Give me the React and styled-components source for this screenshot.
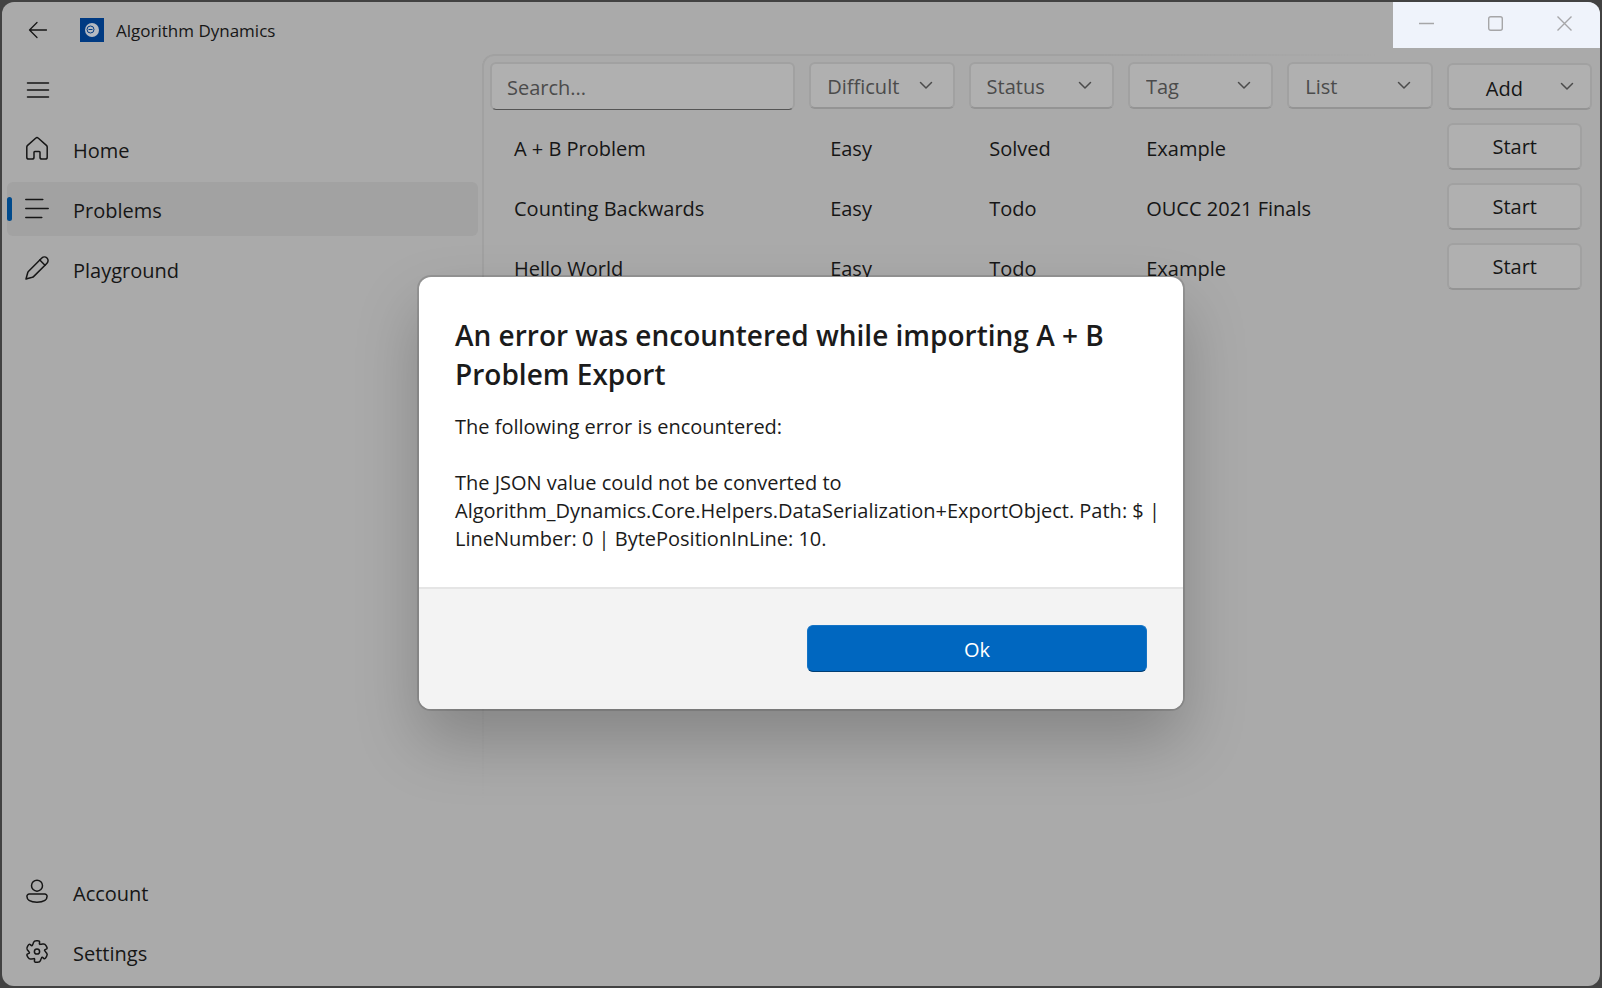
import React from "react";
import styled, { createGlobalStyle } from "styled-components";

const Global = createGlobalStyle`
  *, *::before, *::after { box-sizing: border-box; }
  html, body, #root { height: 100%; }
  body {
    margin: 0;
    background: #424242;
    color: #161616;
    font-family: "Open Sans", "Noto Sans", sans-serif;
    font-size: 20px;
    line-height: 28px;
  }
  button, input, select { font: inherit; color: inherit; margin: 0; }
  svg { display: block; flex: none; fill: none; stroke: currentColor; }
`;

const Desktop = styled.div`
  min-height: 100%;
  display: flex;
  padding: 2px;
`;

const Window = styled.div`
  position: relative;
  flex: 1;
  display: flex;
  flex-direction: column;
  overflow: hidden;
  border-radius: 12px;
  background: #aaaaaa;
`;

const TitleBar = styled.header`
  display: flex;
  align-items: flex-start;
  height: 52px;
`;

const BackButton = styled.button`
  display: grid;
  place-items: center;
  width: 60px;
  height: 56px;
  margin-left: 6px;
  padding: 0;
  border: 0;
  background: none;
`;

const AppTitle = styled.div`
  display: flex;
  flex: 1;
  align-items: center;
  gap: 12px;
  height: 56px;
  padding-left: 12px;
  font-size: 17px;

  span { padding-top: 2px; }
`;

const Caption = styled.div`
  display: flex;
  background: #eff3fb;
`;

const CaptionButton = styled.button`
  display: grid;
  place-items: center;
  width: 69px;
  height: 46px;
  padding: 0 2px 3px 0;
  border: 0;
  background: none;
  color: #a6a6a8;
`;

const Body = styled.div`
  display: flex;
  flex: 1;
`;

const Sidebar = styled.nav`
  display: flex;
  flex: none;
  flex-direction: column;
  gap: 6px;
  width: 480px;
  padding: 8px 4px 7px 5px;
`;

const MenuButton = styled.button`
  display: flex;
  align-items: center;
  width: 62px;
  height: 54px;
  padding: 2px 0 0 19px;
  border: 0;
  background: none;
`;

const Spacer = styled.div`
  flex: 1;
`;

const NavItem = styled.a`
  position: relative;
  display: flex;
  align-items: center;
  gap: 24px;
  height: 54px;
  padding-left: 18px;
  border-radius: 6px;
  background: ${(p) => (p.$active ? "#a2a2a2" : "transparent")};
  color: inherit;
  text-decoration: none;

  &::before {
    content: "";
    display: ${(p) => (p.$active ? "block" : "none")};
    position: absolute;
    left: 0;
    width: 5px;
    height: 24px;
    border-radius: 3px;
    background: #004a8c;
  }

  svg { margin-bottom: 2px; }
  span { padding-top: 4px; }
`;

const Panel = styled.main`
  position: relative;
  flex: 1;
  min-width: 0;
  padding: 8px 8px 0;

  &::before {
    content: "";
    position: absolute;
    inset: 0;
    border: 2px solid #a1a1a1;
    border-width: 2px 0 0 2px;
    border-top-left-radius: 12px;
    mask-image: linear-gradient(to bottom, #000 55%, transparent 80%),
      linear-gradient(to right, #000 55%, transparent 80%);
    mask-composite: intersect;
    pointer-events: none;
  }
`;

const Toolbar = styled.div`
  display: grid;
  grid-template-columns: 21fr repeat(5, 10fr);
  gap: 14px;
  height: 48px;
`;

const SearchBox = styled.input`
  min-width: 0;
  height: 48px;
  padding: 2px 15px 0;
  border: 2px solid #a1a1a1;
  border-bottom: 1px solid #555555;
  border-radius: 6px;
  background: #b0b0b0;
  outline: none;

  &::placeholder { color: #4b4b4b; opacity: 1; }
`;

const Combo = styled.div`
  display: grid;
  align-items: center;
  height: 47px;
  color: #4b4b4b;

  > * { grid-area: 1 / 1; }
  svg { justify-self: end; margin-right: 22px; pointer-events: none; }
`;

const ComboSelect = styled.select`
  appearance: none;
  width: 100%;
  min-width: 0;
  height: 47px;
  padding: 2px 40px 0 16px;
  border: 2px solid #a1a1a1;
  border-bottom-color: #949494;
  border-radius: 6px;
  background: #b0b0b0;
`;

const PushButton = styled.button`
  display: flex;
  align-items: center;
  justify-content: center;
  width: 100%;
  height: 47px;
  padding: 2px 0 0;
  border: 2px solid #a1a1a1;
  border-bottom-color: #949494;
  border-radius: 6px;
  background: #b0b0b0;
`;

const AddButton = styled(PushButton)`
  align-self: end;
  padding: 0 16px 0 0;

  span { flex: 1; padding-top: 4px; text-align: center; }
  svg { color: #4b4b4b; }
`;

const ProblemTable = styled.table`
  width: calc(100% - 34px);
  margin: 6px 10px 0 24px;
  table-layout: fixed;
  border-collapse: collapse;
`;

const Cell = styled.td`
  width: ${(p) => p.$width};
  height: 60px;
  padding: 6px 0 0;
  white-space: nowrap;
`;

const ActionCell = styled(Cell)`
  padding: 0;
`;

const Overlay = styled.div`
  position: absolute;
  inset: 0;
  display: grid;
  place-items: center;
  padding-bottom: 2px;
  pointer-events: none;
`;

const Dialog = styled.section`
  width: 764px;
  max-width: 90%;
  overflow: hidden;
  border-radius: 12px;
  background: #ffffff;
  color: #1b1b1b;
  box-shadow: 0 0 0 2px rgba(0, 0, 0, 0.12), 0 32px 64px rgba(0, 0, 0, 0.22);
  pointer-events: auto;
`;

const DialogBody = styled.div`
  padding: 39px 16px 34px 36px;
`;

const DialogTitle = styled.h1`
  margin: 0 0 19px;
  font-size: 28px;
  font-weight: 600;
  line-height: 39px;
`;

const Message = styled.p`
  margin: 0;

  & + & { margin-top: 28px; }
`;

const DialogFooter = styled.footer`
  display: grid;
  grid-template-columns: 1fr 1fr;
  gap: 12px;
  padding: 36px 36px 37px;
  border-top: 2px solid #e5e5e5;
  background: #f3f3f3;
`;

const PrimaryButton = styled.button`
  grid-column: 2;
  height: 47px;
  padding: 2px 0 0;
  border: 1px solid #1473c5;
  border-bottom-color: #003e73;
  border-radius: 6px;
  background: #0067c0;
  color: #ffffff;
`;

const Chevron = () => (
  <svg width="14" height="9" viewBox="0 0 14 9" strokeWidth="1.5" strokeLinecap="round" strokeLinejoin="round">
    <path d="M1.5 1.5 7 7l5.5-5.5" />
  </svg>
);

// Outline of a six-toothed gear, its corners rounded by curves between edge midpoints.
const gearPath = () => {
  const pts = [];
  for (let tooth = 0; tooth < 6; tooth += 1) {
    [[11.1, -15], [11.1, 15], [7.4, 17], [8.3, 30]].forEach(([r, offset]) => {
      const a = ((tooth * 60 + offset - 90) * Math.PI) / 180;
      pts.push([12 + r * Math.cos(a), 12.5 + r * Math.sin(a)]);
    });
  }
  const toward = (p, q, t) => [p[0] + (q[0] - p[0]) * t, p[1] + (q[1] - p[1]) * t];
  return (
    pts
      .map((p, i) => {
        const before = toward(p, pts[(i + pts.length - 1) % pts.length], 0.4);
        const after = toward(p, pts[(i + 1) % pts.length], 0.4);
        return `${i ? "L" : "M"}${before} Q${p} ${after}`;
      })
      .join(" ") + "Z"
  );
};

const icons = {
  home: <path d="M10.600 2.200a2 2 0 0 1 2.800 0l8 7.200c.5.5.8 1 .8 1.700v10.100a1.900 1.900 0 0 1-1.900 1.900h-3.400a1.900 1.900 0 0 1-1.900-1.900v-5a.8.8 0 0 0-.8-.8h-4.400a.8.8 0 0 0-.8.8v5a1.900 1.900 0 0 1-1.900 1.900H3.700a1.900 1.900 0 0 1-1.900-1.900V11.100c0-.7.3-1.200.8-1.700z" />,
  problems: <path d="M.8 3.500h17M.8 12.500h22.400M.8 21.500h16" />,
  playground: (
    <>
      <path d="M1 23l1.700-6.300c.2-.6.500-1.100.900-1.500L16.800 2a3.600 3.600 0 0 1 5.200 5.200L8.800 20.400c-.4.4-.9.7-1.500.9z" />
      <path d="M14.800 4l5.200 5.200" />
    </>
  ),
  account: (
    <>
      <circle cx="12" cy="6.700" r="5.500" />
      <path d="M4.200 15h15.600a2.300 2.300 0 0 1 2.300 2.300c0 4-4.500 5.900-10.100 5.900S1.900 21.300 1.900 17.300a2.300 2.300 0 0 1 2.300-2.300z" />
    </>
  ),
  settings: (
    <>
      <circle cx="12" cy="12.500" r="2.600" />
      <path d={gearPath()} />
    </>
  ),
};

const NavIcon = ({ name }) => (
  <svg width="24" height="24" viewBox="0 0 24 24" strokeWidth="1.500" strokeLinecap="round" strokeLinejoin="round">
    {icons[name]}
  </svg>
);

const Logo = () => (
  <svg width="24" height="24" viewBox="0 0 24 24">
    <rect width="24" height="24" fill="#003a82" stroke="none" />
    <circle cx="12" cy="12" r="7" fill="#b4b9c1" stroke="none" />
    <circle cx="10.500" cy="11.500" r="3.500" stroke="#003a82" />
    <path d="M8.500 11.500h4" stroke="#003a82" />
  </svg>
);

const filters = ["Difficult", "Status", "Tag", "List"];

const problems = [
  { name: "A + B Problem", difficulty: "Easy", status: "Solved", tag: "Example" },
  { name: "Counting Backwards", difficulty: "Easy", status: "Todo", tag: "OUCC 2021 Finals" },
  { name: "Hello World", difficulty: "Easy", status: "Todo", tag: "Example" },
];

const NavLink = ({ icon, active, children }) => (
  <NavItem href={`#${icon}`} $active={active} aria-current={active ? "page" : undefined}>
    <NavIcon name={icon} />
    <span>{children}</span>
  </NavItem>
);

export default function App() {
  return (
    <>
      <Global />
      <Desktop>
        <Window>
          <TitleBar>
            <BackButton aria-label="Back">
              <svg width="20" height="18" viewBox="0 0 20 18" strokeWidth="1.300" strokeLinecap="round" strokeLinejoin="round">
                <path d="M18.500 9H1.500M9 1.500 1.500 9 9 16.500" />
              </svg>
            </BackButton>
            <AppTitle>
              <Logo />
              <span>Algorithm Dynamics</span>
            </AppTitle>
            <Caption>
              <CaptionButton aria-label="Minimize">
                <svg width="15" height="15" viewBox="0 0 15 15" strokeWidth="1.400"><path d="M0 7.500h15" /></svg>
              </CaptionButton>
              <CaptionButton aria-label="Maximize">
                <svg width="15" height="15" viewBox="0 0 15 15" strokeWidth="1.400"><rect x=".7" y=".7" width="13.600" height="13.600" rx="2" /></svg>
              </CaptionButton>
              <CaptionButton aria-label="Close">
                <svg width="15" height="15" viewBox="0 0 15 15" strokeWidth="1.400"><path d="M.5.5l14 14M14.500.5l-14 14" /></svg>
              </CaptionButton>
            </Caption>
          </TitleBar>
          <Body>
            <Sidebar>
              <MenuButton aria-label="Toggle navigation">
                <svg width="24" height="18" viewBox="0 0 24 18" strokeWidth="1.500" strokeLinecap="round">
                  <path d="M1.500 2h21M1.500 9h21M1.500 16h21" />
                </svg>
              </MenuButton>
              <NavLink icon="home">Home</NavLink>
              <NavLink icon="problems" active>Problems</NavLink>
              <NavLink icon="playground">Playground</NavLink>
              <Spacer />
              <NavLink icon="account">Account</NavLink>
              <NavLink icon="settings">Settings</NavLink>
            </Sidebar>
            <Panel>
              <Toolbar>
                <SearchBox type="text" placeholder="Search..." aria-label="Search problems" />
                {filters.map((name) => (
                  <Combo key={name}>
                    <ComboSelect aria-label={name} defaultValue="">
                      <option value="">{name}</option>
                    </ComboSelect>
                    <Chevron />
                  </Combo>
                ))}
                <AddButton>
                  <span>Add</span>
                  <Chevron />
                </AddButton>
              </Toolbar>
              <ProblemTable>
                <tbody>
                  {problems.map((p) => (
                    <tr key={p.name}>
                      <Cell $width="29.6%">{p.name}</Cell>
                      <Cell $width="14.9%">{p.difficulty}</Cell>
                      <Cell $width="14.7%">{p.status}</Cell>
                      <Cell $width="28.2%">{p.tag}</Cell>
                      <ActionCell $width="12.6%"><PushButton>Start</PushButton></ActionCell>
                    </tr>
                  ))}
                </tbody>
              </ProblemTable>
            </Panel>
          </Body>
          <Overlay>
            <Dialog role="dialog" aria-modal="true" aria-labelledby="dialog-title">
              <DialogBody>
                <DialogTitle id="dialog-title">
                  An error was encountered while importing A + B Problem Export
                </DialogTitle>
                <Message>The following error is encountered:</Message>
                <Message>
                  The JSON value could not be converted to Algorithm_Dynamics.Core.Helpers.DataSerialization+ExportObject. Path: $ | LineNumber: 0 | BytePositionInLine: 10.
                </Message>
              </DialogBody>
              <DialogFooter>
                <PrimaryButton>Ok</PrimaryButton>
              </DialogFooter>
            </Dialog>
          </Overlay>
        </Window>
      </Desktop>
    </>
  );
}
